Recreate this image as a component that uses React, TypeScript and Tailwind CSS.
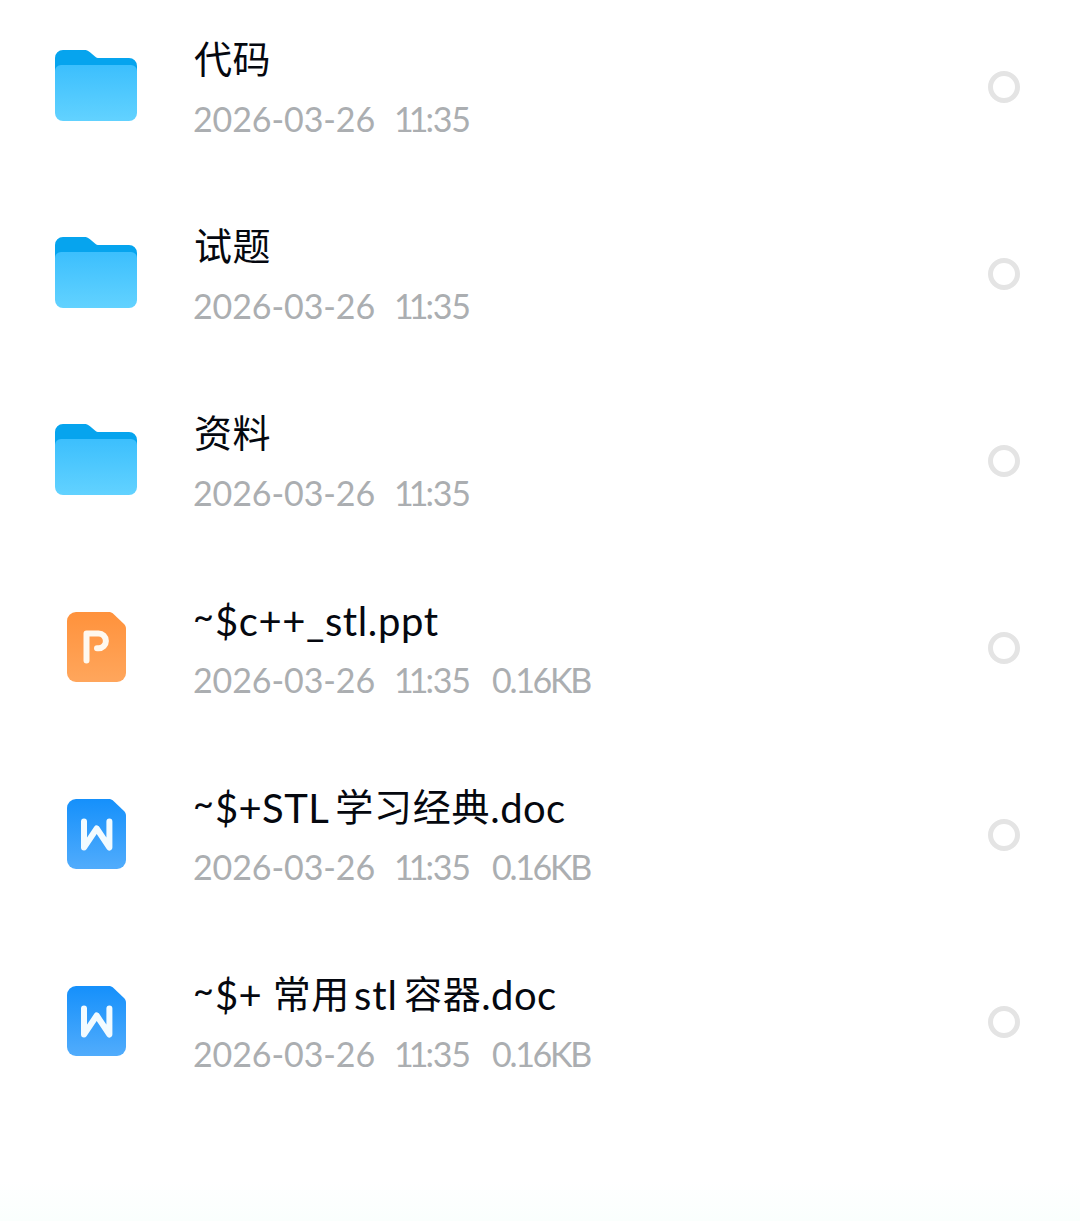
type FileKind = 'folder' | 'ppt' | 'doc';

type NamePart = { text: string; className: string };

type FileItem = {
    kind: FileKind;
    name: NamePart[];
    date: string;
    time: string;
    size?: string;
};

const cjk = 'text-[38px] tracking-[0.6px]';
const latin = 'text-[40px] tracking-[0.4px] translate-y-[2px]';
const tilde = 'text-[36px] -translate-y-[4px] -ml-px mr-px';

const files: FileItem[] = [
    { kind: 'folder', name: [{ text: '代码', className: cjk }], date: '2026-03-26', time: '11:35' },
    { kind: 'folder', name: [{ text: '试题', className: cjk }], date: '2026-03-26', time: '11:35' },
    { kind: 'folder', name: [{ text: '资料', className: cjk }], date: '2026-03-26', time: '11:35' },
    {
        kind: 'ppt',
        name: [
            { text: '~', className: tilde },
            { text: '$c++_stl.ppt', className: 'text-[40px] tracking-[0.6px] translate-y-[2px]' },
        ],
        date: '2026-03-26',
        time: '11:35',
        size: '0.16KB',
    },
    {
        kind: 'doc',
        name: [
            { text: '~', className: tilde },
            { text: '$+STL', className: latin },
            { text: '学习经典', className: 'ml-[6px] text-[38px] tracking-[0.8px]' },
            { text: '.doc', className: latin },
        ],
        date: '2026-03-26',
        time: '11:35',
        size: '0.16KB',
    },
    {
        kind: 'doc',
        name: [
            { text: '~', className: tilde },
            { text: '$+ ', className: latin },
            { text: '常用', className: cjk },
            { text: 'stl', className: 'ml-[4px] text-[40px] tracking-[1px] translate-y-[2px]' },
            { text: '容器', className: 'ml-[6px] text-[38px] tracking-[0.6px]' },
            { text: '.doc', className: latin },
        ],
        date: '2026-03-26',
        time: '11:35',
        size: '0.16KB',
    },
];

const FolderIcon = () => (
    <svg className="-mt-[2px]" width="82" height="72" viewBox="0 0 82 72" fill="none">
        <defs>
            <linearGradient id="folder-front" x1="0" y1="0" x2="0" y2="1">
                <stop offset="0" stopColor="#3cbffd" />
                <stop offset="1" stopColor="#62d2ff" />
            </linearGradient>
        </defs>
        <path
            d="M0 8a8 8 0 0 1 8-8h21c2.500 0 4 .6 6 2.200l5 4.200c1.300 1.100 2.300 1.600 4 1.600h30a8 8 0 0 1 8 8v20H0z"
            fill="#06a4ee"
        />
        <path
            d="M0 21a6 6 0 0 1 6-6h70a6 6 0 0 1 6 6v42a8 8 0 0 1-8 8H8a8 8 0 0 1-8-8z"
            fill="url(#folder-front)"
        />
    </svg>
);

const pageShape = 'M9 0h32.500c2 0 3.500.6 5 2l10.500 10c1.400 1.400 2 2.800 2 4.800V61a9 9 0 0 1-9 9H9a9 9 0 0 1-9-9V9a9 9 0 0 1 9-9z';

const PptIcon = () => (
    <svg className="ml-[1px]" width="59" height="71" viewBox="0 0 59 71" fill="none">
        <defs>
            <linearGradient id="ppt-page" x1="0" y1="0" x2="0" y2="1">
                <stop offset="0" stopColor="#ff923c" />
                <stop offset="1" stopColor="#ffa65c" />
            </linearGradient>
        </defs>
        <path d={pageShape} fill="url(#ppt-page)" />
        <path
            d="M19.500 48.500V21.500H31.500a7.400 7.400 0 0 1 0 14.800h-1.500"
            stroke="#fff8ee"
            strokeWidth="6"
            strokeLinecap="round"
            strokeLinejoin="round"
        />
    </svg>
);

const DocIcon = () => (
    <svg className="ml-[1px]" width="59" height="71" viewBox="0 0 59 71" fill="none">
        <defs>
            <linearGradient id="doc-page" x1="0" y1="0" x2="0" y2="1">
                <stop offset="0" stopColor="#1590fb" />
                <stop offset="1" stopColor="#51acfc" />
            </linearGradient>
        </defs>
        <path d={pageShape} fill="url(#doc-page)" />
        <polyline
            points="17,22.500 17,48.500 29.700,29.500 42.400,48.500 42.400,22.500"
            stroke="#f2fbff"
            strokeWidth="6"
            strokeLinecap="round"
            strokeLinejoin="round"
        />
    </svg>
);

const icons = {
    folder: <FolderIcon />,
    ppt: <PptIcon />,
    doc: <DocIcon />,
};

const FileRow = ({ file }: { file: FileItem }) => {
    const [hours, minutes] = file.time.split(':');

    return (
        <li className="mb-[14px] flex h-[173px] items-center pr-[60px] pl-[54px]">
            <div className="flex w-[84px] shrink-0 justify-center">{icons[file.kind]}</div>
            <div className="ml-[56px] flex-1 self-start pt-[28px] whitespace-pre">
                <div className="flex h-[66px] items-baseline leading-[60px] text-[#05080f]">
                    {file.name.map((part, i) => (
                        <span key={i} className={part.className}>
                            {part.text}
                        </span>
                    ))}
                </div>
                <div className="flex h-[50px] items-baseline text-[34px] leading-[50px] text-[#abaeb1]">
                    <span className="-ml-px w-[201px] tracking-[-0.1px]">{file.date}</span>
                    <span className="w-[98px]">
                        <span className="tracking-[-5px]">{hours}</span>
                        <span className="ml-[2px] tracking-[-1.2px]">:{minutes}</span>
                    </span>
                    {file.size && <span className="tracking-[-2.3px]">{file.size}</span>}
                </div>
            </div>
            <div className="size-8 shrink-0 rounded-full border-[5px] border-[#e4e4e4]" />
        </li>
    );
};

export default function App() {
    return (
        <div className="flex h-[1221px] w-[1080px] flex-col overflow-hidden bg-white font-[Lato,'Noto_Sans_CJK_SC',sans-serif]">
            <ul className="flex-1">
                {files.map((file, i) => (
                    <FileRow key={i} file={file} />
                ))}
            </ul>
            <div className="h-[40px] shrink-0 bg-linear-to-b from-white to-[#fafffd]" />
        </div>
    );
}
